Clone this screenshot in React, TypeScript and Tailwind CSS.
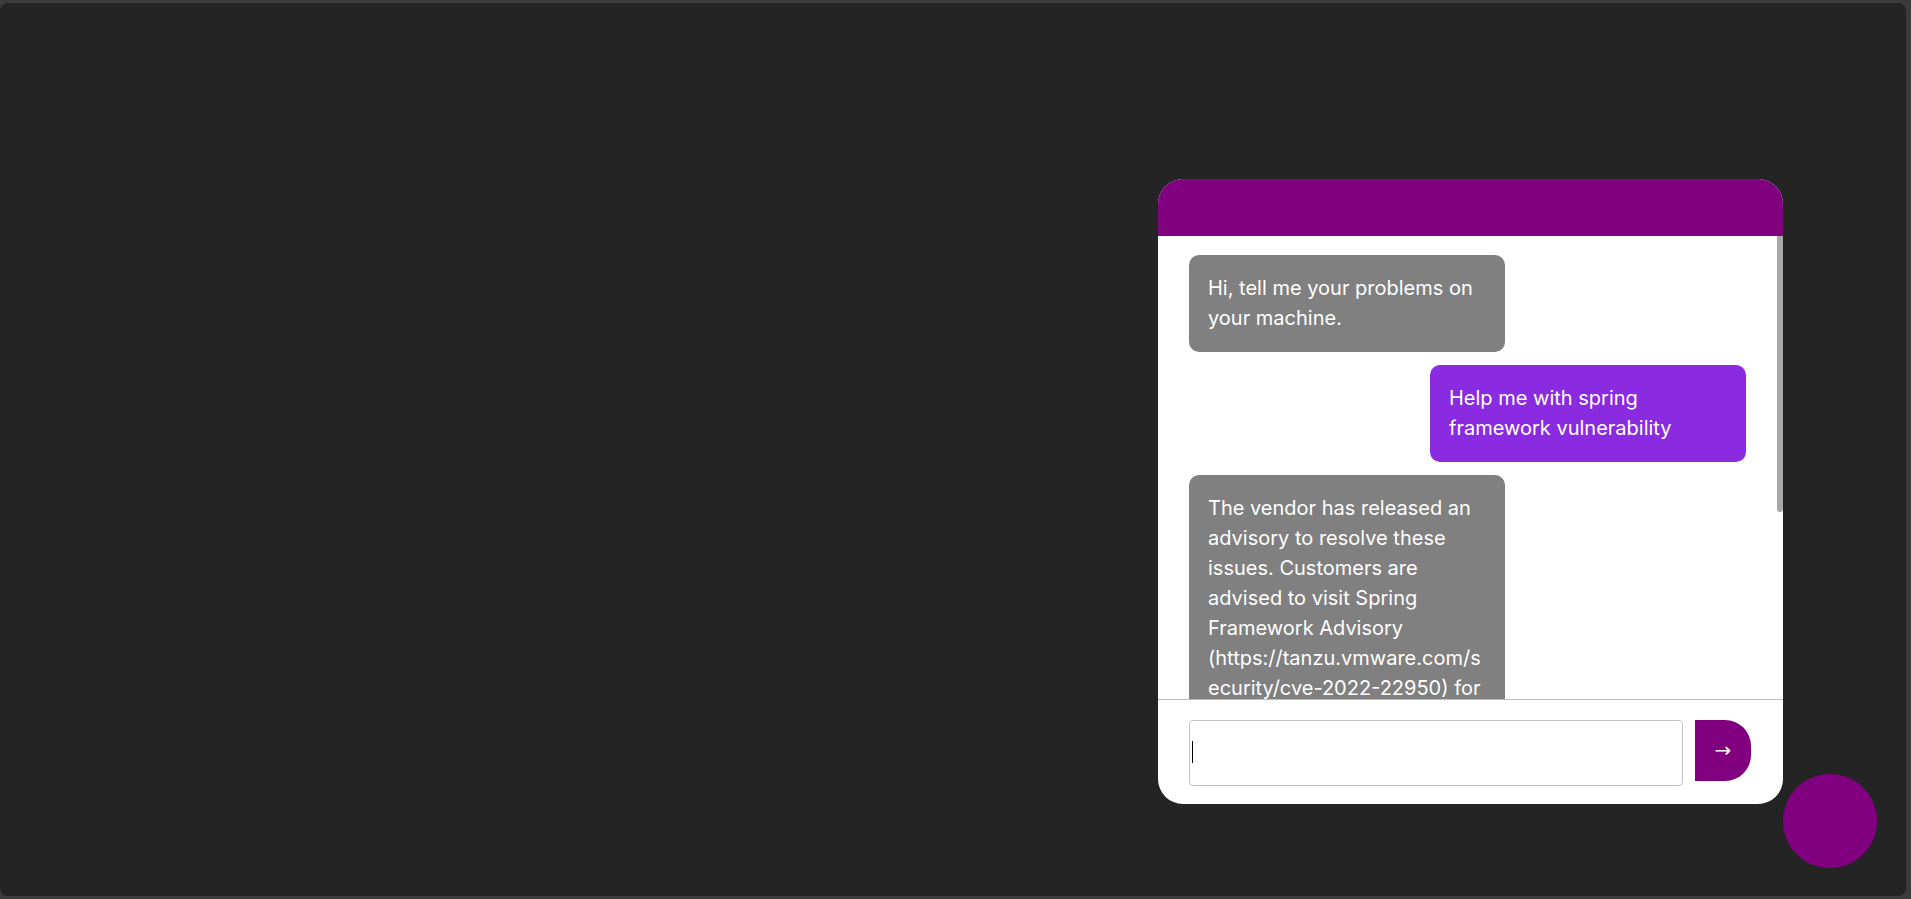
const messages = [
  { from: "bot", text: "Hi, tell me your problems on your machine." },
  { from: "user", text: "Help me with spring framework vulnerability" },
  {
    from: "bot",
    text: "The vendor has released an advisory to resolve these issues. Customers are advised to visit Spring Framework Advisory (https://tanzu.vmware.com/security/cve-2022-22950) for more information.",
  },
];

function Bubble({ from, text }: { from: string; text: string }) {
  const isUser = from === "user";
  return (
    <div className={isUser ? "flex justify-end" : "flex justify-start"}>
      <div
        className={
          "max-w-[316px] rounded-[10px] px-[19px] pt-[18px] pb-[19px] text-[20px] leading-[30px] text-white break-words " +
          (isUser ? "bg-[#8a2be2]" : "bg-[#808080]")
        }
      >
        {text}
      </div>
    </div>
  );
}

export default function App() {
  return (
    <div className="h-[899px] w-full bg-[#3b3b3b] pt-[3px] pr-[5px] pb-[3px] font-['Inter','Liberation_Sans',sans-serif]">
      <div className="flex h-full w-full items-end justify-end rounded-[8px] bg-[#242424] pr-[29px] pb-[28px]">
        <div className="mb-[64px] flex h-[625px] w-[625px] flex-col overflow-hidden rounded-[25px] bg-white">
          <div className="h-[57px] shrink-0 bg-[#800080]" />
          <div className="relative flex-1 overflow-hidden">
            <div className="flex flex-col gap-[13px] pt-[19px] pr-[37px] pl-[31px]">
              {messages.map((m, i) => (
                <Bubble key={i} from={m.from} text={m.text} />
              ))}
            </div>
            <div className="absolute top-0 right-0 h-[276px] w-[6px] rounded-b-[3px] bg-[#a9a9a9]" />
          </div>
          <div className="flex shrink-0 items-start gap-[12px] border-t border-[#bdbdbd] pt-[20px] pr-[32px] pb-[18px] pl-[31px]">
            <div className="relative flex-1">
              <input
                type="text"
                className="h-[66px] w-full rounded-[4px] border border-[#c4c4c4] px-[4px] text-[16px] text-black outline-none"
              />
              {/* text caret */}
              <span className="pointer-events-none absolute top-[21px] left-[3px] h-[22px] w-px bg-black" />
            </div>
            <button className="flex h-[61px] w-[56px] items-center justify-center rounded-r-[26px] bg-[#800080] pb-[2px] font-['DejaVu_Sans',sans-serif] text-[20px] text-white">
              →
            </button>
          </div>
        </div>
        <div className="h-[94px] w-[94px] shrink-0 rounded-full bg-[#800080]" />
      </div>
    </div>
  );
}
